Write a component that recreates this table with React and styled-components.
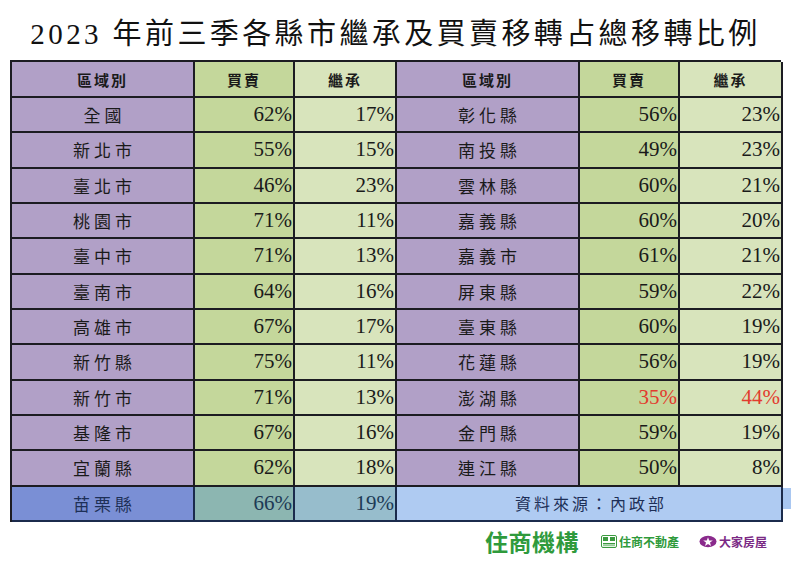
import styled, { createGlobalStyle } from "styled-components";

const GlobalStyle = createGlobalStyle`
  html, body {
    margin: 0;
    padding: 0;
    background: #ffffff;
  }
`;

const CJK = `"Liberation Serif", "Noto Sans CJK TC", serif`;

const Page = styled.div`
  width: 791px;
  height: 561px;
  background: #ffffff;
  display: flex;
  flex-direction: column;
  overflow: hidden;
`;

const Title = styled.h1`
  margin: 0;
  height: 60px;
  display: flex;
  align-items: center;
  justify-content: center;
  font-family: ${CJK};
  font-weight: 400;
  font-size: 29px;
  letter-spacing: 3.4px;
  color: #111111;
  padding-top: 2px;
  box-sizing: border-box;
`;

const Sheet = styled.div`
  margin-left: 10px;
  width: 771px;
  display: grid;
  grid-template-columns: 183px 100px 102px 183px 100px 103px;
  grid-template-rows: 36px;
  grid-auto-rows: 35.33px;
  border-left: 2px solid #1c1c22;
  border-top: 2px solid #1c1c22;
  box-sizing: border-box;
  position: relative;
`;

const Cell = styled.div`
  box-sizing: border-box;
  border-right: 2px solid ${(p) => (p.$last ? "#1b2b4c" : "#1c1c22")};
  border-bottom: 2px solid ${(p) => (p.$last ? "#1b2b4c" : "#1c1c22")};
  background: ${(p) => p.$bg};
  display: flex;
  align-items: center;
  font-family: ${CJK};
  overflow: hidden;
`;

const HeadCell = styled(Cell)`
  justify-content: center;
  font-family: "Noto Sans CJK TC", sans-serif;
  font-weight: 700;
  font-size: 15px;
  letter-spacing: 2px;
  color: #1a1a1a;
`;

const NameCell = styled(Cell)`
  justify-content: center;
  font-family: "Noto Sans CJK TC", sans-serif;
  font-size: 17px;
  letter-spacing: 4px;
  padding-left: 4px;
  color: ${(p) => p.$ink || "#1a1a1a"};
`;

const NumCell = styled(Cell)`
  justify-content: flex-end;
  padding-right: 1px;
  font-size: 21px;
  color: ${(p) => (p.$hot ? "#e23b2e" : p.$ink || "#1a1a1a")};
`;

const SourceCell = styled(NameCell)`
  grid-column: span 3;
  letter-spacing: 3px;
  font-size: 16px;
  position: relative;
  overflow: visible;

  &::after {
    content: "";
    position: absolute;
    right: -12px;
    top: 1px;
    width: 10px;
    height: 21px;
    background: #a9c7f1;
  }
`;

const Footer = styled.div`
  flex: 1;
  display: flex;
  align-items: center;
  justify-content: flex-end;
  padding-right: 24px;
  gap: 20px;
`;

const Group = styled.div`
  font-family: "Noto Sans CJK TC", sans-serif;
  font-weight: 700;
  font-size: 23px;
  color: #2f9a3c;
  letter-spacing: 0.5px;
  margin-right: 2px;
`;

const Brand = styled.div`
  display: flex;
  align-items: center;
  gap: 2px;
  font-family: "Noto Sans CJK TC", sans-serif;
  font-weight: 700;
  font-size: 12px;
  color: ${(p) => p.$color};
`;

const colors = {
  name: "#b1a0c7",
  buy: "#c4d79b",
  inherit: "#d8e4bc",
};

const left = [
  ["全國", "62%", "17%"],
  ["新北市", "55%", "15%"],
  ["臺北市", "46%", "23%"],
  ["桃園市", "71%", "11%"],
  ["臺中市", "71%", "13%"],
  ["臺南市", "64%", "16%"],
  ["高雄市", "67%", "17%"],
  ["新竹縣", "75%", "11%"],
  ["新竹市", "71%", "13%"],
  ["基隆市", "67%", "16%"],
  ["宜蘭縣", "62%", "18%"],
];

const right = [
  ["彰化縣", "56%", "23%"],
  ["南投縣", "49%", "23%"],
  ["雲林縣", "60%", "21%"],
  ["嘉義縣", "60%", "20%"],
  ["嘉義市", "61%", "21%"],
  ["屏東縣", "59%", "22%"],
  ["臺東縣", "60%", "19%"],
  ["花蓮縣", "56%", "19%"],
  ["澎湖縣", "35%", "44%", true],
  ["金門縣", "59%", "19%"],
  ["連江縣", "50%", "8%"],
];

function Trio({ row }) {
  const [name, buy, inherit, hot] = row;
  return (
    <>
      <NameCell $bg={colors.name}>{name}</NameCell>
      <NumCell $bg={colors.buy} $hot={hot}>{buy}</NumCell>
      <NumCell $bg={colors.inherit} $hot={hot}>{inherit}</NumCell>
    </>
  );
}

function HouseMark() {
  return (
    <svg width="16" height="13" viewBox="0 0 16 13">
      <rect x="0.5" y="0.5" width="15" height="12" rx="1.5" fill="#ffffff" stroke="#3b9a3f" />
      <rect x="2" y="2" width="5" height="4" fill="#3b9a3f" />
      <rect x="9" y="2" width="5" height="4" fill="#3b9a3f" />
      <rect x="2" y="8" width="12" height="1.4" fill="#3b9a3f" />
      <rect x="2" y="10.2" width="12" height="1" fill="#7cc27e" />
    </svg>
  );
}

function FamilyMark() {
  return (
    <svg width="18" height="13" viewBox="0 0 18 13">
      <ellipse cx="9" cy="6.5" rx="8.5" ry="5.8" fill="#8a2a8c" />
      <path d="M9 2.2 L10.2 5.4 L13.8 5.6 L11 7.6 L12 11 L9 9 L6 11 L7 7.6 L4.2 5.6 L7.8 5.4 Z" fill="#ffffff" />
    </svg>
  );
}

export default function App() {
  return (
    <Page>
      <GlobalStyle />
      <Title>2023 年前三季各縣市繼承及買賣移轉占總移轉比例</Title>

      <Sheet>
        <HeadCell $bg={colors.name}>區域別</HeadCell>
        <HeadCell $bg={colors.buy}>買賣</HeadCell>
        <HeadCell $bg={colors.inherit}>繼承</HeadCell>
        <HeadCell $bg={colors.name}>區域別</HeadCell>
        <HeadCell $bg={colors.buy}>買賣</HeadCell>
        <HeadCell $bg={colors.inherit}>繼承</HeadCell>

        {left.map((row, i) => (
          <Trio key={row[0]} row={row} />
        )).flatMap((l, i) => [l, <Trio key={right[i][0]} row={right[i]} />])}

        <NameCell $bg="#7a8fd5" $ink="#1d2f57" $last>苗栗縣</NameCell>
        <NumCell $bg="#8cb6b1" $ink="#1d3a55" $last>66%</NumCell>
        <NumCell $bg="#97bdcc" $ink="#1d3a55" $last>19%</NumCell>
        <SourceCell $bg="#afcbf2" $ink="#1d2f57" $last>資料來源：內政部</SourceCell>
      </Sheet>

      <Footer>
        <Group>住商機構</Group>
        <Brand $color="#2f9a3c">
          <HouseMark />
          住商不動產
        </Brand>
        <Brand $color="#7b2a85">
          <FamilyMark />
          大家房屋
        </Brand>
      </Footer>
    </Page>
  );
}
